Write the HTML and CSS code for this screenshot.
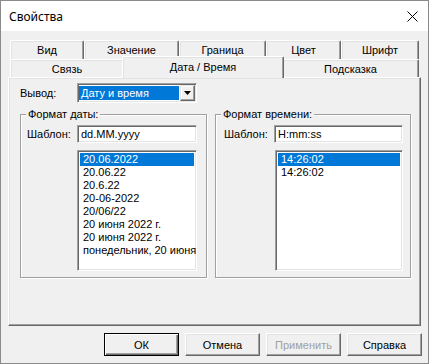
FILE: index.html
```html
<!DOCTYPE html>
<html lang="ru">
<head>
  <meta charset="UTF-8">
  <title>Свойства</title>
  <link rel="stylesheet" href="styles.css">
</head>
<body>

<div class="window">
  <div class="titlebar">
    <span class="title">Свойства</span>
    <svg class="close" width="11" height="11" viewBox="0 0 11 11">
      <path d="M0.5 0.5 L10.5 10.5 M10.5 0.5 L0.5 10.5" stroke="#000" stroke-width="1" fill="none"/>
    </svg>
  </div>

  <div class="content">
    <div class="tabs">
      <div class="tab-row back">
        <div class="tab w-vid">Вид</div>
        <div class="tab w-value">Значение</div>
        <div class="tab w-border">Граница</div>
        <div class="tab w-color">Цвет</div>
        <div class="tab w-font">Шрифт</div>
      </div>
      <div class="tab-row front">
        <div class="tab w-link">Связь</div>
        <div class="tab w-date selected">Дата / Время</div>
        <div class="tab w-hint">Подсказка</div>
      </div>
    </div>

    <div class="panel">
      <div class="output-row">
        <span class="label">Вывод:</span>
        <div class="combo">
          <span class="combo-value">Дату и время</span>
          <span class="combo-btn">
            <svg width="7" height="4" viewBox="0 0 7 4"><path d="M0 0 H7 L3.5 4 Z" fill="#000"/></svg>
          </span>
        </div>
      </div>

      <div class="groups">
        <div class="group group-date">
          <span class="group-title">Формат даты:</span>
          <div class="field">
            <span class="label">Шаблон:</span>
            <div class="input">dd.MM.yyyy</div>
          </div>
          <ul class="list">
            <li class="selected">20.06.2022</li>
            <li>20.06.22</li>
            <li>20.6.22</li>
            <li>20-06-2022</li>
            <li>20/06/22</li>
            <li>20 июня 2022 г.</li>
            <li>20 июня 2022 г.</li>
            <li>понедельник, 20 июня</li>
          </ul>
        </div>

        <div class="group group-time">
          <span class="group-title">Формат времени:</span>
          <div class="field">
            <span class="label">Шаблон:</span>
            <div class="input">H:mm:ss</div>
          </div>
          <ul class="list">
            <li class="selected">14:26:02</li>
            <li>14:26:02</li>
          </ul>
        </div>
      </div>
    </div>

    <div class="buttons">
      <button class="btn default">ОК</button>
      <button class="btn">Отмена</button>
      <button class="btn" disabled>Применить</button>
      <button class="btn">Справка</button>
    </div>
  </div>
</div>

</body>
</html>
```

FILE: styles.css
```css
body {
  margin: 0;
  background-color: #fff;
}

.window {
  width: 429px;
  height: 364px;
  box-sizing: border-box;
  border: 1px solid #8a8a8a;
  background-color: #f0f0f0;
  font-family: "Liberation Sans", Arial, sans-serif;
  font-size: 11px;
  color: #000;
}

/* Title bar */
.titlebar {
  height: 30px;
  background-color: #fff;
  display: flex;
  align-items: center;
  justify-content: space-between;
  padding: 0 10px 0 8px;
}

.title {
  font-family: "Noto Sans", "Open Sans", sans-serif;
  font-size: 12px;
}

.close {
  display: block;
}

.content {
  padding-top: 9px;
}

/* Tabs */
.tabs {
  margin-left: 9px;
  width: 409px;
}

.tab-row {
  display: flex;
}

.tab-row.back {
  height: 19px;
}

.tab-row.front {
  height: 18px;
  align-items: flex-end;
}

.tab {
  box-sizing: border-box;
  height: 100%;
  display: flex;
  align-items: center;
  justify-content: center;
  border-top: 1px solid #fff;
  border-left: 1px solid #fff;
  border-right: 1px solid #696969;
  box-shadow: inset -1px 0 0 #a0a0a0, inset 1px 1px 0 #e3e3e3;
  border-radius: 2px 2px 0 0;
  background-color: #f0f0f0;
}

.w-vid { width: 74px; }
.w-value { width: 95px; }
.w-border { width: 87px; }
.w-color { width: 75px; }
.w-font { width: 78px; }
.w-link { width: 114px; }
.w-hint { width: 137px; }

.w-date { width: 162px; }

.tab.selected {
  position: relative;
  z-index: 2;
  height: 22px;
  margin: 0 -2px -1px;
  padding-bottom: 2px;
}

/* Panel */
.panel {
  position: relative;
  z-index: 1;
  box-sizing: border-box;
  width: 413px;
  height: 249px;
  margin-left: 7px;
  padding: 5px 0 0 11px;
  border-top: 1px solid #fff;
  border-left: 1px solid #fff;
  border-right: 1px solid #696969;
  border-bottom: 1px solid #696969;
  box-shadow: inset -1px -1px 0 #a0a0a0, inset 1px 1px 0 #e3e3e3;
}

.label {
  display: inline-block;
  width: 57px;
}

.output-row {
  display: flex;
  align-items: center;
  height: 20px;
}

.combo {
  box-sizing: border-box;
  width: 120px;
  height: 20px;
  display: flex;
  padding: 1px;
  background-color: #fff;
  border-top: 1px solid #a0a0a0;
  border-left: 1px solid #a0a0a0;
  border-right: 1px solid #fff;
  border-bottom: 1px solid #fff;
  box-shadow: inset 1px 1px 0 #696969, inset -1px -1px 0 #e3e3e3;
}

.combo-value {
  flex: 1;
  margin: 1px 1px 1px 0;
  padding-left: 2px;
  background-color: #0078d7;
  color: #fff;
  line-height: 14px;
}

.combo-btn {
  box-sizing: border-box;
  width: 15px;
  display: flex;
  align-items: center;
  justify-content: center;
  background-color: #f0f0f0;
  border-top: 1px solid #e3e3e3;
  border-left: 1px solid #e3e3e3;
  border-right: 1px solid #696969;
  border-bottom: 1px solid #696969;
  box-shadow: inset -1px -1px 0 #a0a0a0, inset 1px 1px 0 #fff;
}

/* Group boxes */
.groups {
  display: flex;
  gap: 8px;
  margin-top: 11px;
}

.group {
  position: relative;
  box-sizing: border-box;
  height: 164px;
  border: 1px solid #a0a0a0;
  box-shadow: inset 1px 1px 0 #fff, 1px 1px 0 #fff;
}

.group-date {
  width: 187px;
  padding: 10px 0 0 6px;
}

.group-time {
  width: 196px;
  padding: 10px 0 0 8px;
}

.group-title {
  position: absolute;
  top: -7px;
  left: 5px;
  padding: 0 2px;
  background-color: #f0f0f0;
  line-height: 13px;
}

.field {
  display: flex;
  align-items: center;
  height: 18px;
}

.field .label {
  width: 50px;
}

.input,
.list {
  box-sizing: border-box;
  background-color: #fff;
  border-top: 1px solid #a0a0a0;
  border-left: 1px solid #a0a0a0;
  border-right: 1px solid #fff;
  border-bottom: 1px solid #fff;
  box-shadow: inset 1px 1px 0 #696969, inset -1px -1px 0 #e3e3e3;
}

.input {
  width: 120px;
  height: 18px;
  line-height: 16px;
  padding-left: 3px;
}

.group-time .input {
  width: 129px;
}

.list {
  list-style: none;
  margin: 7px 0 0 50px;
  padding: 2px;
  width: 120px;
  height: 121px;
}

.group-time .list {
  width: 128px;
  margin-left: 51px;
}

.list li {
  height: 13px;
  line-height: 13px;
  padding-left: 3px;
  white-space: nowrap;
}

.list li.selected {
  background-color: #0078d7;
  color: #fff;
}

/* Bottom buttons */
.buttons {
  display: flex;
  gap: 6px;
  margin: 7px 0 0 103px;
}

.btn {
  box-sizing: border-box;
  width: 75px;
  height: 23px;
  padding: 0;
  font-family: "Liberation Sans", Arial, sans-serif;
  font-size: 11px;
  color: #000;
  background-color: #f0f0f0;
  border-top: 1px solid #fff;
  border-left: 1px solid #fff;
  border-right: 1px solid #696969;
  border-bottom: 1px solid #696969;
  box-shadow: inset -1px -1px 0 #a0a0a0, inset 1px 1px 0 #e3e3e3;
}

.btn.default {
  border: 1px solid #000;
  box-shadow: inset 1px 1px 0 #fff, inset -1px -1px 0 #696969, inset -2px -2px 0 #a0a0a0;
}

.btn:disabled {
  color: #a0a0a0;
}
```
